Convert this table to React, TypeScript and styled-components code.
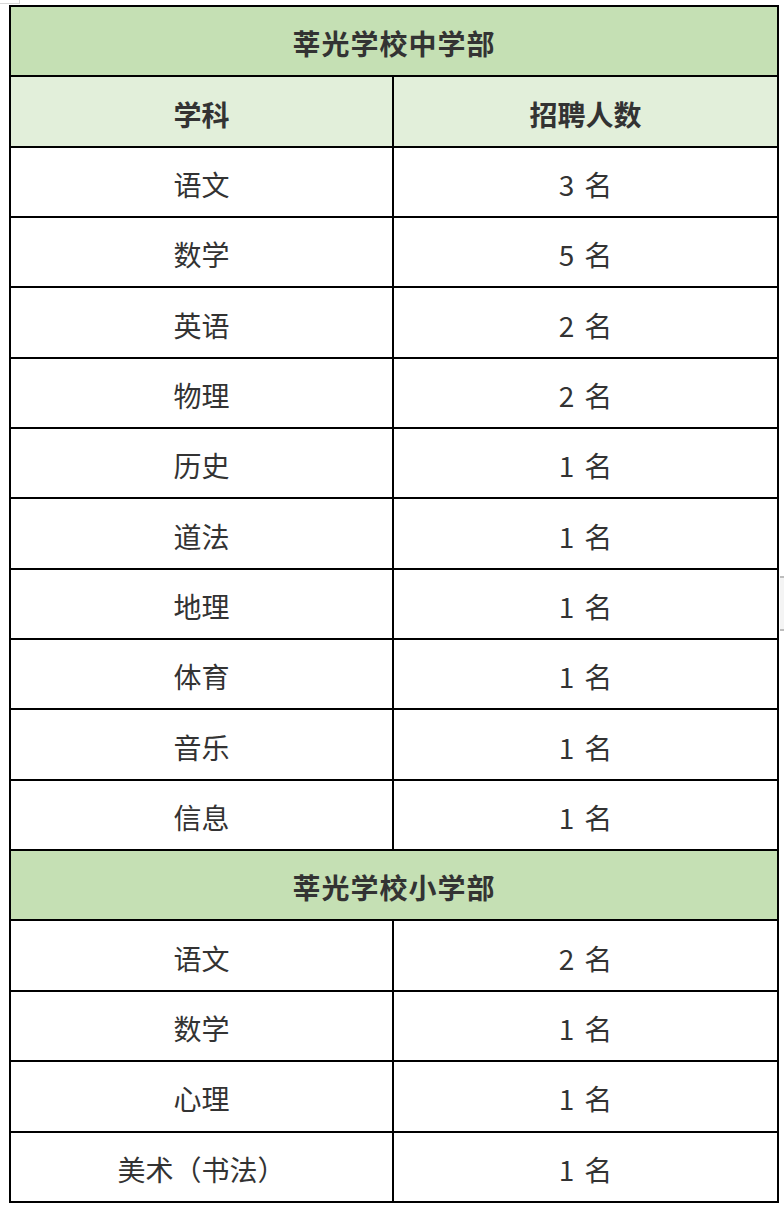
import React from "react";
import styled, { createGlobalStyle } from "styled-components";

const GlobalStyle = createGlobalStyle`
  html, body {
    margin: 0;
    padding: 0;
    background: #ffffff;
  }
  body {
    font-family: "Noto Sans CJK SC", "Noto Sans", sans-serif;
  }
`;

const Page = styled.div`
  position: relative;
  width: 784px;
  height: 1206px;
  padding: 5px 0 0 9px;
  box-sizing: border-box;
`;

const Grid = styled.div`
  display: grid;
  grid-template-columns: 383px 385px;
  grid-auto-rows: 70.35px;
  width: 770px;
  box-sizing: border-box;
  border-top: 2px solid #000;
  border-left: 2px solid #000;
`;

const Cell = styled.div<{ $variant?: "title" | "head" | "body" }>`
  display: flex;
  align-items: center;
  justify-content: center;
  box-sizing: border-box;
  border-right: 2px solid #000;
  border-bottom: 2px solid #000;
  font-size: 28px;
  line-height: 1;
  color: #333333;
  font-weight: ${(p) => (p.$variant === "body" ? 400 : 700)};
  letter-spacing: ${(p) => (p.$variant === "title" ? "1px" : "0")};
  background: ${(p) =>
    p.$variant === "title" ? "#c5e0b4" : p.$variant === "head" ? "#e2efda" : "#ffffff"};
  grid-column: ${(p) => (p.$variant === "title" ? "1 / span 2" : "auto")};
  padding-top: 4px;
`;

const Count = styled.span`
  display: inline-flex;
  align-items: center;
  gap: 10px;
`;

const ScrollThumb = styled.div`
  position: absolute;
  left: 780px;
  top: 576px;
  width: 4px;
  height: 55px;
  background: #f4f4f4;
  border-top: 2px solid #bdbdbd;
  border-bottom: 2px solid #bdbdbd;
  box-sizing: border-box;
`;

const CornerMark = styled.div`
  position: absolute;
  left: 0;
  top: 0;
  width: 20px;
  height: 4px;
  border-bottom: 1px solid #d6d6d6;
  border-right: 1px solid #d6d6d6;
  box-sizing: border-box;
`;

const middle: [string, number][] = [
  ["语文", 3],
  ["数学", 5],
  ["英语", 2],
  ["物理", 2],
  ["历史", 1],
  ["道法", 1],
  ["地理", 1],
  ["体育", 1],
  ["音乐", 1],
  ["信息", 1],
];

const primary: [string, number][] = [
  ["语文", 2],
  ["数学", 1],
  ["心理", 1],
  ["美术（书法）", 1],
];

const Rows = ({ rows }: { rows: [string, number][] }) => (
  <>
    {rows.map(([subject, n], i) => (
      <React.Fragment key={subject + i}>
        <Cell $variant="body">{subject}</Cell>
        <Cell $variant="body">
          <Count>
            <span>{n}</span>
            <span>名</span>
          </Count>
        </Cell>
      </React.Fragment>
    ))}
  </>
);

export default function App() {
  return (
    <>
      <GlobalStyle />
      <Page>
        <CornerMark />
        <Grid>
          <Cell $variant="title">莘光学校中学部</Cell>
          <Cell $variant="head">学科</Cell>
          <Cell $variant="head">招聘人数</Cell>
          <Rows rows={middle} />
          <Cell $variant="title">莘光学校小学部</Cell>
          <Rows rows={primary} />
        </Grid>
        <ScrollThumb />
      </Page>
    </>
  );
}
